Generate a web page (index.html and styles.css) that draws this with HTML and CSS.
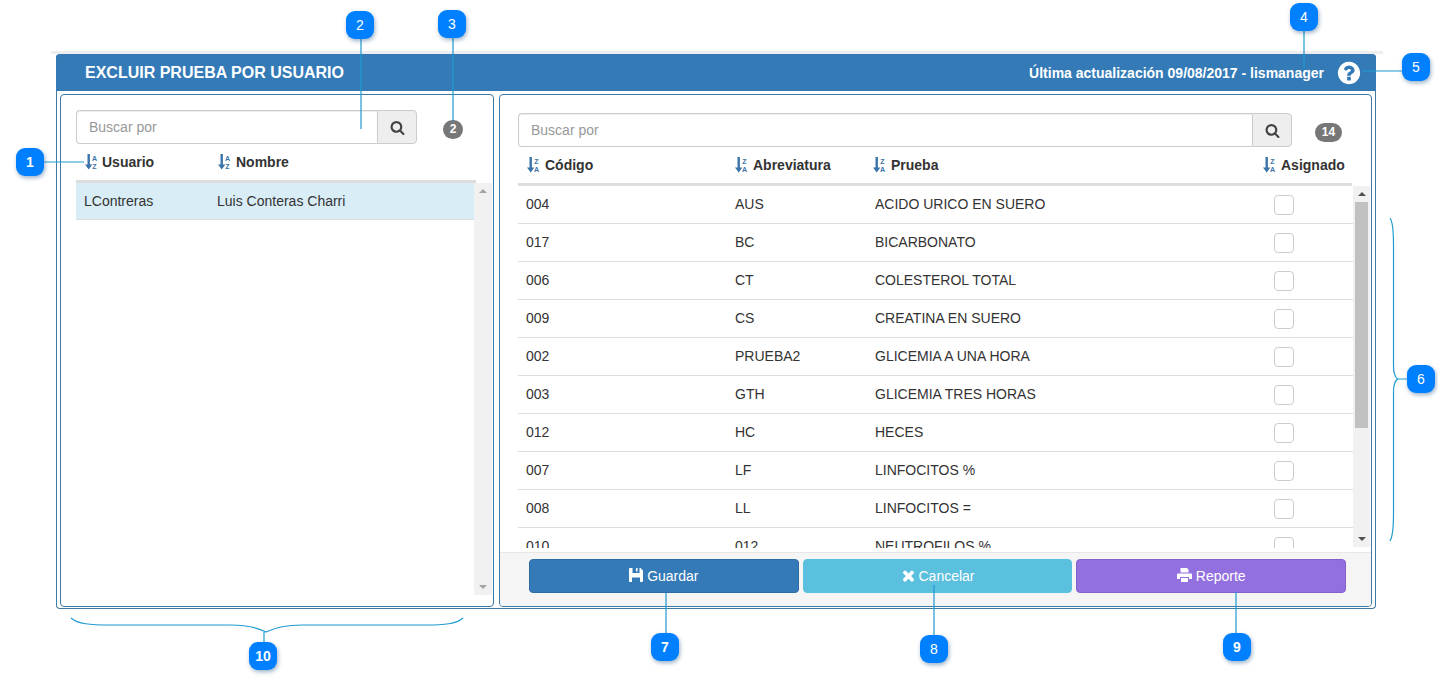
FILE: index.html
```html
<!DOCTYPE html>
<html>
<head>
  <title>Excluir prueba por usuario</title>
  <link rel="stylesheet" href="styles.css">
</head>
<body>
  <svg width="0" height="0" class="defs">
    <symbol id="i-search" viewBox="0 0 1792 1792"><path d="M1216 832q0-185-131.5-316.5t-316.5-131.5-316.5 131.5-131.5 316.5 131.5 316.5 316.5 131.5 316.5-131.5 131.5-316.5zm512 832q0 52-38 90t-90 38q-54 0-90-38l-343-342q-179 124-399 124-143 0-273.5-55.5t-225-150-150-225-55.5-273.5 55.5-273.5 150-225 225-150 273.5-55.5 273.5 55.5 225 150 150 225 55.5 273.5q0 220-124 399l343 343q37 37 37 90z"/></symbol>
    <symbol id="i-save" viewBox="0 0 14 14"><path fill-rule="evenodd" d="M1 0h10.500l2.500 2.500V13a1 1 0 0 1-1 1H1a1 1 0 0 1-1-1V1a1 1 0 0 1 1-1zM3.500 0v5h7V0H8.500v3.500H7V0zM3 9.500V14h8V9.500z"/></symbol>
    <symbol id="i-times" viewBox="0 0 1792 1792"><path d="M1490 1322q0 40-28 68l-136 136q-28 28-68 28t-68-28l-294-294-294 294q-28 28-68 28t-68-28l-136-136q-28-28-28-68t28-68l294-294-294-294q-28-28-28-68t28-68l136-136q28-28 68-28t68 28l294 294 294-294q28-28 68-28t68 28l136 136q28 28 28 68t-28 68l-294 294 294 294q28 28 28 68z"/></symbol>
    <symbol id="i-print" viewBox="0 0 15 14"><path d="M3.500 0H10l1.500 1.500V4.500h-8zM1 5.500h13a1 1 0 0 1 1 1V11h-3V9H3v2H0V6.500a1 1 0 0 1 1-1zM4 10h7v4H4z"/></symbol>
    <symbol id="i-help" viewBox="0 0 1792 1792"><path d="M1024 1376v-192q0-14-9-23t-23-9h-192q-14 0-23 9t-9 23v192q0 14 9 23t23 9h192q14 0 23-9t9-23zm256-672q0-88-55.5-163t-138.5-116-170-41q-243 0-371 213-15 24 8 42l132 100q7 6 19 6 16 0 25-12 53-68 86-92 34-24 86-24 48 0 85.5 26t37.5 59q0 38-20 61t-68 45q-63 28-115.5 86.5t-52.5 125.5v36q0 14 9 23t23 9h192q14 0 23-9t9-23q0-19 21.5-49.5t54.5-49.5q32-18 49-28.5t46-35 44.5-48 28-60.5 12.5-81zm384 192q0 209-103 385.5t-279.5 279.5-385.5 103-385.5-103-279.5-279.5-103-385.5 103-385.5 279.5-279.5 385.5-103 385.5 103 279.5 279.5 103 385.5z"/></symbol>
    <symbol id="i-arrow" viewBox="0 0 13 16"><path d="M2.500 0h2.400v10.500h2.500L3.700 15.500 0 10.500h2.500z"/></symbol>
  </svg>

  <div class="page">
    <div class="topline"></div>
    <div class="window">
      <div class="window-head">
        <div class="window-title">EXCLUIR PRUEBA POR USUARIO</div>
        <div class="window-info">
          <span>Última actualización 09/08/2017 - lismanager</span>
          <svg class="help-icon"><use href="#i-help"/></svg>
        </div>
      </div>

      <div class="window-body">
        <!-- usuarios -->
        <div class="box box-left">
          <div class="search-row">
            <div class="search search-left">
              <input class="search-input" type="text" placeholder="Buscar por">
              <button class="search-btn"><svg class="search-icon"><use href="#i-search"/></svg></button>
            </div>
            <span class="count count-left">2</span>
          </div>
          <div class="thead thead-left">
            <div class="th th-usuario"><svg class="sort-icon" viewBox="0 0 13 16"><use href="#i-arrow"/><text x="9.500" y="6.500" class="sort-letter">A</text><text x="9.500" y="14.500" class="sort-letter">Z</text></svg>Usuario</div>
            <div class="th"><svg class="sort-icon" viewBox="0 0 13 16"><use href="#i-arrow"/><text x="9.500" y="6.500" class="sort-letter">A</text><text x="9.500" y="14.500" class="sort-letter">Z</text></svg>Nombre</div>
          </div>
          <div class="list-wrap list-wrap-left">
            <div class="rows rows-left">
              <div class="row-user"><span class="cell-usuario">LContreras</span><span>Luis Conteras Charri</span></div>
            </div>
            <div class="scrollbar scrollbar-left">
              <span class="arrow-up arrow-light"></span>
              <span class="arrow-down arrow-light"></span>
            </div>
          </div>
        </div>

        <!-- pruebas -->
        <div class="box box-right">
          <div class="search-row search-row-right">
            <div class="search search-right">
              <input class="search-input" type="text" placeholder="Buscar por">
              <button class="search-btn"><svg class="search-icon"><use href="#i-search"/></svg></button>
            </div>
            <span class="count count-right">14</span>
          </div>
          <div class="thead thead-right">
            <div class="th"><svg class="sort-icon" viewBox="0 0 13 16"><use href="#i-arrow"/><text x="9.500" y="6.500" class="sort-letter">Z</text><text x="9.500" y="14.500" class="sort-letter">A</text></svg>Código</div>
            <div class="th"><svg class="sort-icon" viewBox="0 0 13 16"><use href="#i-arrow"/><text x="9.500" y="6.500" class="sort-letter">Z</text><text x="9.500" y="14.500" class="sort-letter">A</text></svg>Abreviatura</div>
            <div class="th"><svg class="sort-icon" viewBox="0 0 13 16"><use href="#i-arrow"/><text x="9.500" y="6.500" class="sort-letter">Z</text><text x="9.500" y="14.500" class="sort-letter">A</text></svg>Prueba</div>
            <div class="th"><svg class="sort-icon" viewBox="0 0 13 16"><use href="#i-arrow"/><text x="9.500" y="6.500" class="sort-letter">Z</text><text x="9.500" y="14.500" class="sort-letter">A</text></svg>Asignado</div>
          </div>
          <div class="list-wrap list-wrap-right">
            <div class="rows rows-right">
              <div class="row-test"><span>004</span><span>AUS</span><span>ACIDO URICO EN SUERO</span><span class="check"></span></div>
              <div class="row-test"><span>017</span><span>BC</span><span>BICARBONATO</span><span class="check"></span></div>
              <div class="row-test"><span>006</span><span>CT</span><span>COLESTEROL TOTAL</span><span class="check"></span></div>
              <div class="row-test"><span>009</span><span>CS</span><span>CREATINA EN SUERO</span><span class="check"></span></div>
              <div class="row-test"><span>002</span><span>PRUEBA2</span><span>GLICEMIA A UNA HORA</span><span class="check"></span></div>
              <div class="row-test"><span>003</span><span>GTH</span><span>GLICEMIA TRES HORAS</span><span class="check"></span></div>
              <div class="row-test"><span>012</span><span>HC</span><span>HECES</span><span class="check"></span></div>
              <div class="row-test"><span>007</span><span>LF</span><span>LINFOCITOS %</span><span class="check"></span></div>
              <div class="row-test"><span>008</span><span>LL</span><span>LINFOCITOS =</span><span class="check"></span></div>
              <div class="row-test"><span>010</span><span>012</span><span>NEUTROFILOS %</span><span class="check"></span></div>
            </div>
            <div class="scrollbar scrollbar-right">
              <span class="arrow-up"></span>
              <span class="thumb"></span>
              <span class="arrow-down"></span>
            </div>
          </div>
          <div class="actions">
            <button class="btn btn-save"><svg class="btn-icon icon-save"><use href="#i-save"/></svg>Guardar</button>
            <button class="btn btn-cancel"><svg class="btn-icon icon-times"><use href="#i-times"/></svg>Cancelar</button>
            <button class="btn btn-report"><svg class="btn-icon icon-print"><use href="#i-print"/></svg>Reporte</button>
          </div>
        </div>
      </div>
    </div>
  </div>

  <!-- notas numeradas sobre la captura -->
  <svg class="callout-lines" width="1438" height="682">
    <path d="M44 162H84M361 38V129M453 38V121M1304 30V68M1362 71H1403M666 593V634M934 585V636M1236 592V634M1397 379H1407M264 632V642"/>
    <path d="M1390 218C1393 222 1393.500 232 1393.500 245V366C1393.500 373 1395 377 1397.500 379C1395 381 1393.500 385 1393.500 392V514C1393.500 528 1393 536 1390 541"/>
    <path d="M71 618C78 624 90 625 110 625H230C248 625 258 628 266 632C274 628 284 625 302 625H425C445 625 456 624 463 618"/>
  </svg>
  <div class="note note-1">1</div>
  <div class="note note-light note-2">2</div>
  <div class="note note-light note-3">3</div>
  <div class="note note-light note-4">4</div>
  <div class="note note-light note-5">5</div>
  <div class="note note-light note-6">6</div>
  <div class="note note-7">7</div>
  <div class="note note-light note-8">8</div>
  <div class="note note-9">9</div>
  <div class="note note-10">10</div>
</body>
</html>
```

FILE: styles.css
```css
* {
  box-sizing: border-box;
}

body {
  margin: 0;
  height: 682px;
  overflow: hidden;
  position: relative;
  background: #fff;
  color: #333;
  font-family: "Liberation Sans", Arial, sans-serif;
  font-size: 14px;
}

.defs {
  position: absolute;
}

.page {
  padding: 51px 0 0 51px;
}

.topline {
  width: 1332px;
  height: 3px;
  background: #eee;
}

.window {
  width: 1320px;
  height: 555px;
  margin-left: 5px;
  border: 1px solid #3b7ba5;
  border-top: 0;
  border-radius: 4px;
}

.window-head {
  height: 37px;
  margin: 0 -1px;
  padding: 0 14px 0 29px;
  display: flex;
  justify-content: space-between;
  align-items: center;
  background: #337ab7;
  color: #fff;
  border-radius: 4px 4px 0 0;
}

.window-title {
  font-size: 16px;
  font-weight: bold;
}

.window-info {
  display: flex;
  align-items: center;
  font-weight: bold;
}

.help-icon {
  width: 26px;
  height: 26px;
  margin-left: 12px;
  fill: #fff;
}

.window-body {
  display: flex;
  gap: 5px;
  padding: 3px 3px 0;
}

.box {
  height: 513px;
  border: 1px solid #3b7ba5;
  border-radius: 4px;
  overflow: hidden;
}

.box-left {
  width: 434px;
  padding: 15px 0 0 15px;
}

.box-right {
  width: 873px;
  padding-top: 18px;
  display: flex;
  flex-direction: column;
}

.search-row {
  display: flex;
  align-items: center;
  height: 34px;
}

.search-row-right {
  padding-left: 18px;
}

.search {
  display: flex;
  height: 34px;
}

.search-left {
  width: 341px;
}

.search-right {
  width: 774px;
}

.search-input {
  flex: 1;
  min-width: 0;
  padding: 0 12px;
  border: 1px solid #ccc;
  border-right: 0;
  border-radius: 4px 0 0 4px;
  font-family: inherit;
  font-size: 14px;
  color: #555;
  box-shadow: inset 0 1px 1px rgba(0,0,0,.075);
}

.search-input::placeholder {
  color: #999;
}

.search-btn {
  width: 40px;
  padding: 0;
  display: flex;
  align-items: center;
  justify-content: center;
  background: #eee;
  border: 1px solid #ccc;
  border-radius: 0 4px 4px 0;
}

.search-icon {
  width: 15px;
  height: 15px;
  fill: #444;
}

.count {
  height: 19px;
  margin-top: 4px;
  display: flex;
  align-items: center;
  justify-content: center;
  background: #777;
  color: #fff;
  font-size: 12px;
  font-weight: bold;
  border-radius: 10px;
}

.count-left {
  width: 20px;
  margin-left: 26px;
}

.count-right {
  width: 27px;
  margin-left: 23px;
}

.thead {
  height: 39px;
  display: grid;
  align-items: center;
  border-bottom: 3px solid #ddd;
}

.thead-left {
  width: 400px;
  padding-left: 9px;
  grid-template-columns: 133px 1fr;
}

.thead-right {
  width: 834px;
  margin-left: 18px;
  padding-left: 9px;
  grid-template-columns: 208px 138px 390px 1fr;
}

.th {
  display: flex;
  align-items: center;
  font-weight: bold;
  white-space: nowrap;
}

.sort-icon {
  width: 13px;
  height: 16px;
  margin-right: 5px;
  fill: #3a74a8;
}

.th-usuario .sort-icon {
  margin-right: 4px;
}

.sort-letter {
  font-family: "Liberation Sans", Arial, sans-serif;
  font-size: 7px;
  font-weight: bold;
  text-anchor: middle;
}

.list-wrap {
  display: flex;
  align-items: flex-start;
}

.list-wrap-left {
  height: 412px;
}

.list-wrap-right {
  flex: none;
  height: 366px;
  margin-left: 18px;
}

.rows {
  overflow: hidden;
}

.rows-left {
  width: 398px;
  height: 412px;
}

.rows-right {
  width: 835px;
  height: 362px;
}

.row-user {
  height: 37px;
  padding-left: 8px;
  display: flex;
  align-items: center;
  background: #d9edf7;
  border-bottom: 1px solid #ddd;
}

.cell-usuario {
  width: 133px;
}

.row-test {
  height: 38px;
  padding: 0 0 2px 8px;
  display: grid;
  grid-template-columns: 209px 140px 399px 20px;
  align-items: center;
  border-bottom: 1px solid #ddd;
}

.check {
  width: 20px;
  height: 20px;
  margin-top: 3px;
  background: #fff;
  border: 1px solid #ccc;
  border-radius: 4px;
}

.scrollbar {
  position: relative;
  display: flex;
  flex-direction: column;
  align-items: center;
  background: #f1f1f1;
}

.scrollbar-left {
  width: 18px;
  height: 412px;
}

.scrollbar-right {
  width: 17px;
  height: 361px;
}

.arrow-up,
.arrow-down {
  position: absolute;
  width: 0;
  height: 0;
  border-left: 4px solid transparent;
  border-right: 4px solid transparent;
}

.arrow-up {
  top: 6px;
  border-bottom: 4px solid #505050;
}

.arrow-down {
  bottom: 6px;
  border-top: 4px solid #505050;
}

.arrow-light {
  border-top-color: #a3a3a3;
  border-bottom-color: #a3a3a3;
}

.thumb {
  width: 13px;
  height: 226px;
  margin-top: 16px;
  background: #c1c1c1;
}

.actions {
  flex: none;
  height: 54px;
  padding: 6px 25px 0 29px;
  display: flex;
  gap: 4px;
  background: #f5f5f5;
  border-top: 1px solid #e7e7e7;
}

.btn {
  flex: 1;
  height: 34px;
  display: flex;
  align-items: center;
  justify-content: center;
  color: #fff;
  font-family: inherit;
  font-size: 14px;
  border: 1px solid;
  border-radius: 4px;
}

.btn-icon {
  fill: #fff;
}

.icon-save {
  width: 14px;
  height: 14px;
  margin: -3px 4px 0 0;
}

.icon-times {
  width: 17px;
  height: 17px;
  margin: -1px 1px 0 0;
}

.icon-print {
  width: 15px;
  height: 14px;
  margin: -2px 4px 0 0;
}

.btn-save {
  background: #337ab7;
  border-color: #2e6da4;
}

.btn-cancel {
  background: #5bc0de;
  border-color: #5bc0de;
}

.btn-report {
  background: #9370e0;
  border-color: #8460cc;
}

.callout-lines {
  position: absolute;
  left: 0;
  top: 0;
  pointer-events: none;
}

.callout-lines path {
  fill: none;
  stroke: #1f9bd1;
  stroke-width: 1.2;
}

.note {
  position: absolute;
  width: 28px;
  height: 28px;
  display: flex;
  align-items: center;
  justify-content: center;
  background: #0080ff;
  color: #fff;
  font-size: 14px;
  font-weight: bold;
  border-radius: 9px;
  box-shadow: 1px 2px 4px rgba(0,60,120,.4);
}

.note-light {
  font-weight: normal;
}

.note-1 { left: 16px; top: 148px; }
.note-2 { left: 346px; top: 11px; }
.note-3 { left: 438px; top: 10px; }
.note-4 { left: 1290px; top: 3px; }
.note-5 { left: 1402px; top: 53px; }
.note-6 { left: 1407px; top: 365px; }
.note-7 { left: 651px; top: 633px; }
.note-8 { left: 920px; top: 635px; }
.note-9 { left: 1223px; top: 633px; }
.note-10 { left: 249px; top: 642px; }
```
